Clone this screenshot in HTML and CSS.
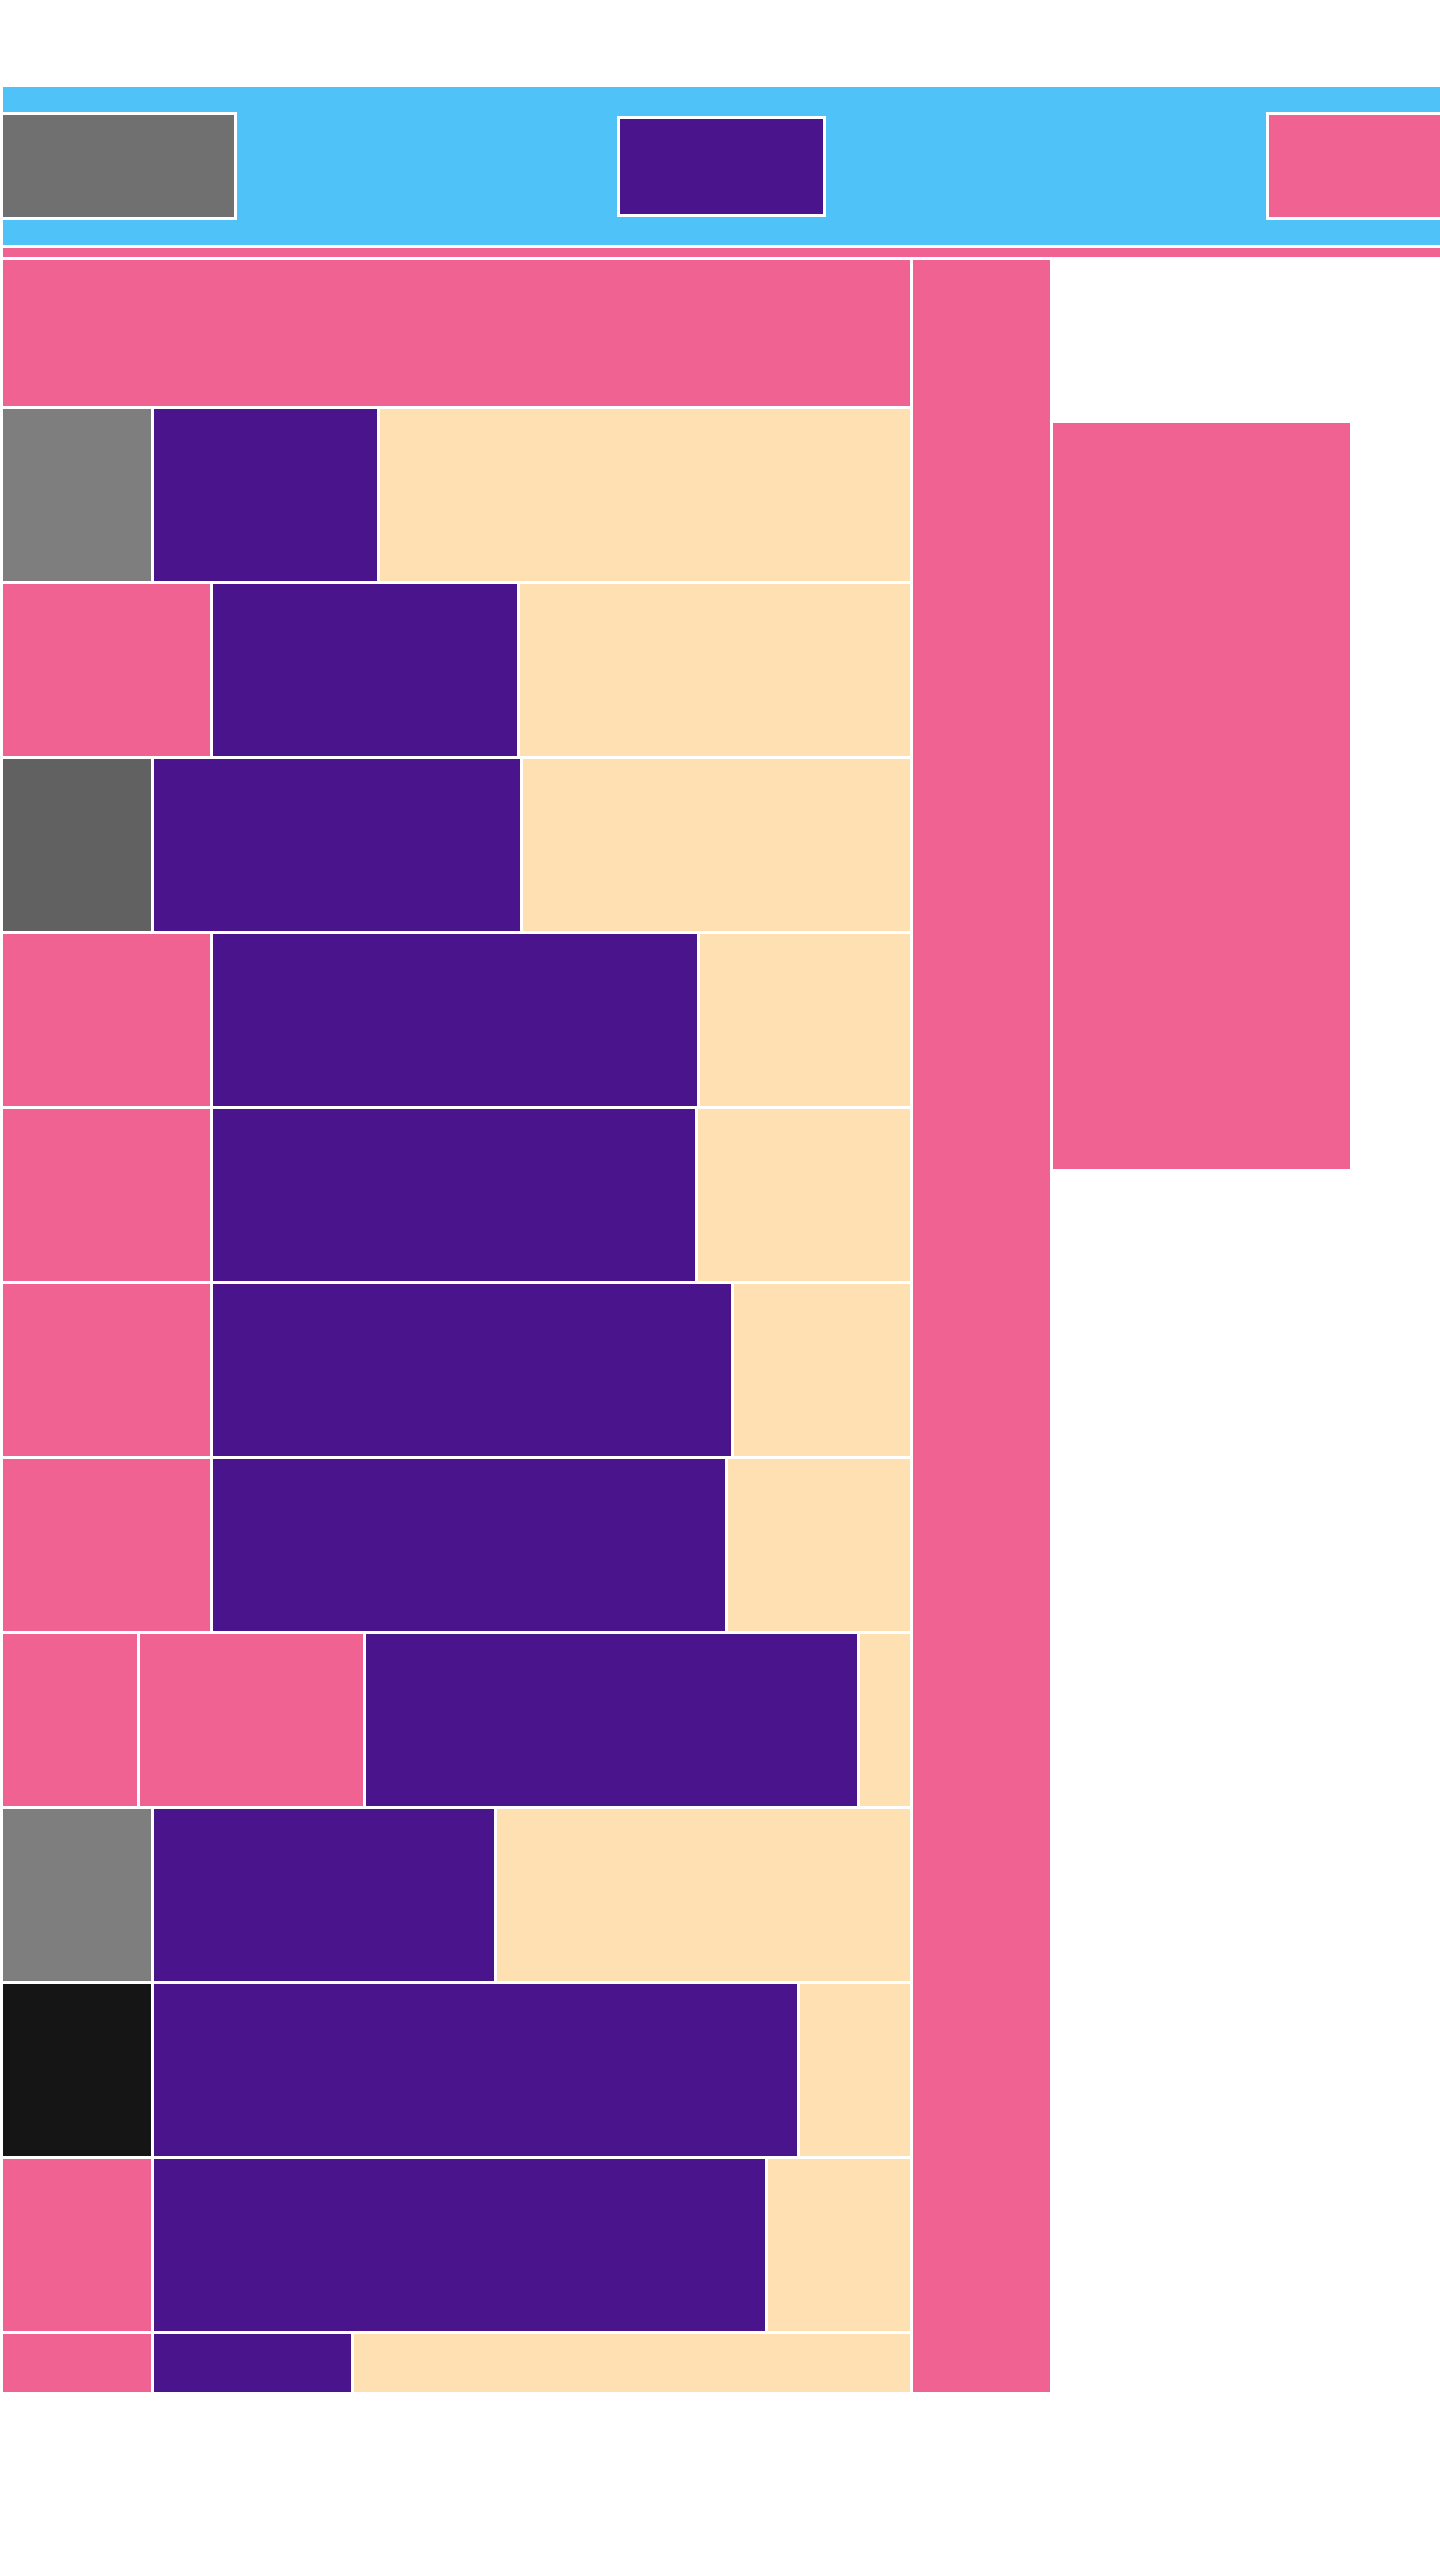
FILE: index.html
```html
<!DOCTYPE html>
<html lang="en">
<head>
    <meta charset="UTF-8">
    <meta name="viewport" content="width=device-width, initial-scale=1.0">
    <title>Layout</title>
    <link rel="stylesheet" href="styles.css">
</head>
<body>
    <div class="page">
        <header class="topbar">
            <div class="logo"></div>
            <div class="brand"></div>
            <div class="account"></div>
        </header>

        <div class="strip"></div>

        <div class="main">
            <div class="content">
                <div class="hero"></div>

                <div class="row">
                    <div class="cell thumb grey"></div>
                    <div class="cell bar" style="width: 223px"></div>
                    <div class="cell rest"></div>
                </div>
                <div class="row">
                    <div class="cell thumb-wide pink"></div>
                    <div class="cell bar" style="width: 304px"></div>
                    <div class="cell rest"></div>
                </div>
                <div class="row">
                    <div class="cell thumb dark"></div>
                    <div class="cell bar" style="width: 366px"></div>
                    <div class="cell rest"></div>
                </div>
                <div class="row">
                    <div class="cell thumb-wide pink"></div>
                    <div class="cell bar" style="width: 484px"></div>
                    <div class="cell rest"></div>
                </div>
                <div class="row">
                    <div class="cell thumb-wide pink"></div>
                    <div class="cell bar" style="width: 482px"></div>
                    <div class="cell rest"></div>
                </div>
                <div class="row">
                    <div class="cell thumb-wide pink"></div>
                    <div class="cell bar" style="width: 518px"></div>
                    <div class="cell rest"></div>
                </div>
                <div class="row">
                    <div class="cell thumb-wide pink"></div>
                    <div class="cell bar" style="width: 512px"></div>
                    <div class="cell rest"></div>
                </div>
                <div class="row">
                    <div class="cell thumb-small pink"></div>
                    <div class="cell thumb-mid pink"></div>
                    <div class="cell bar" style="width: 491px"></div>
                    <div class="cell rest"></div>
                </div>
                <div class="row">
                    <div class="cell thumb grey"></div>
                    <div class="cell bar" style="width: 340px"></div>
                    <div class="cell rest"></div>
                </div>
                <div class="row">
                    <div class="cell thumb black"></div>
                    <div class="cell bar" style="width: 643px"></div>
                    <div class="cell rest"></div>
                </div>
                <div class="row">
                    <div class="cell thumb pink"></div>
                    <div class="cell bar" style="width: 611px"></div>
                    <div class="cell rest"></div>
                </div>
                <div class="row short">
                    <div class="cell thumb pink"></div>
                    <div class="cell bar" style="width: 197px"></div>
                    <div class="cell rest"></div>
                </div>
            </div>

            <aside class="sidebar"></aside>

            <div class="panel"></div>
        </div>
    </div>
</body>
</html>
```

FILE: styles.css
```css
html, body {
    margin: 0;
    padding: 0;
    background-color: #fff;
    overflow-x: hidden;
}
.page {
    padding: 87px 0 0 3px;
}
.topbar {
    height: 158px;
    background-color: #4fc3f7;
    display: grid;
    grid-template-columns: 1fr auto 1fr;
    align-items: center;
}
.logo {
    width: 231px;
    height: 102px;
    margin-left: -3px;
    background-color: #707070;
    border: 3px solid #fff;
}
.brand {
    width: 203px;
    height: 95px;
    background-color: #4a148c;
    border: 3px solid #fff;
}
.account {
    justify-self: end;
    width: 171px;
    height: 102px;
    margin-right: -3px;
    background-color: #f06292;
    border: 3px solid #fff;
}
.strip {
    height: 9px;
    margin-top: 3px;
    background-color: #f06292;
}
.main {
    display: flex;
    align-items: flex-start;
    gap: 3px;
    margin-top: 3px;
}
.content {
    width: 907px;
    display: flex;
    flex-direction: column;
    gap: 3px;
}
.hero {
    height: 146px;
    background-color: #f06292;
}
.row {
    display: flex;
    gap: 3px;
    height: 172px;
}
.row.short {
    height: 58px;
}
.cell {
    flex: none;
}
.thumb {
    width: 148px;
}
.thumb-wide {
    width: 207px;
}
.thumb-small {
    width: 134px;
}
.thumb-mid {
    width: 223px;
}
.grey {
    background-color: #7e7e7e;
}
.dark {
    background-color: #616161;
}
.black {
    background-color: #151515;
}
.pink {
    background-color: #f06292;
}
.bar {
    background-color: #4a148c;
}
.rest {
    flex: 1;
    background-color: #ffe0b2;
}
.sidebar {
    width: 137px;
    align-self: stretch;
    background-color: #f06292;
}
.panel {
    width: 297px;
    height: 746px;
    margin-top: 163px;
    background-color: #f06292;
}
```
